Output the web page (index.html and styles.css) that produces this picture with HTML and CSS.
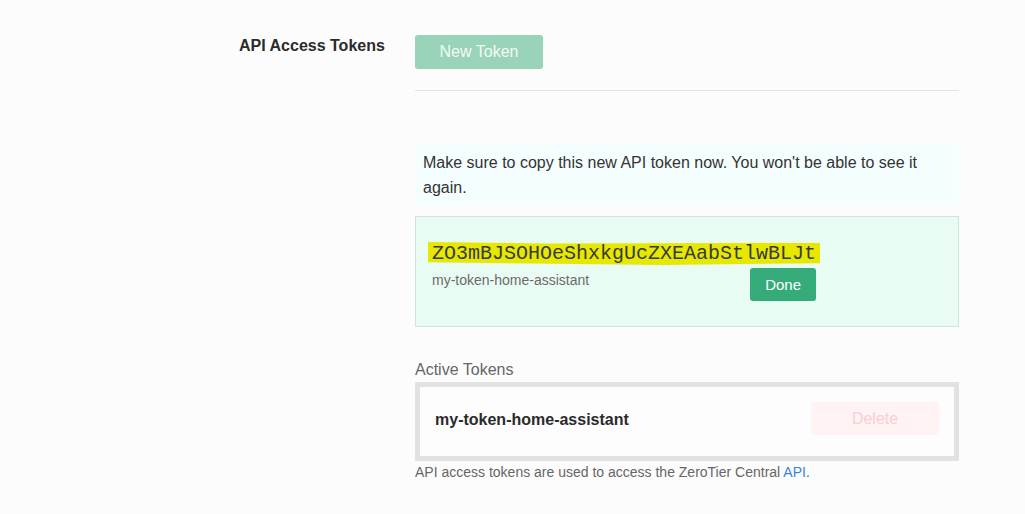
FILE: index.html
```html
<!DOCTYPE html>
<html>
<head>
<meta charset="utf-8">
<link rel="stylesheet" href="styles.css">
</head>
<body>
<div class="page">
  <div class="label">API Access Tokens</div>
  <div class="content">
    <div class="top">
      <button class="btn btn-new">New Token</button>
    </div>
    <div class="notice">Make sure to copy this new API token now. You won't be able to see it again.</div>
    <div class="token-box">
      <div class="token-group">
        <div class="token"><span class="hl">ZO3mBJSOHOeShxkgUcZXEAabStlwBLJt</span></div>
        <div class="token-row">
          <span class="token-name">my-token-home-assistant</span>
          <button class="btn btn-done">Done</button>
        </div>
      </div>
    </div>
    <div class="active-label">Active Tokens</div>
    <div class="active-box">
      <span class="active-name">my-token-home-assistant</span>
      <button class="btn btn-delete">Delete</button>
    </div>
    <div class="footnote">API access tokens are used to access the ZeroTier Central <a href="#" class="link">API</a>.</div>
  </div>
</div>
</body>
</html>
```

FILE: styles.css
```css
html, body {
  margin: 0;
  padding: 0;
  background: #fcfcfc;
  font-family: "Liberation Sans", Arial, sans-serif;
  color: #333;
}
.page {
  display: flex;
  padding: 35px 0 0 239px;
}
.label {
  width: 176px;
  font-weight: bold;
  font-size: 16px;
  line-height: 20px;
  padding-top: 1px;
  color: #2b2b2b;
}
.content {
  width: 544px;
}
.top {
  border-bottom: 1px solid #e3e3e3;
  padding-bottom: 21px;
}
.btn {
  border: none;
  border-radius: 3px;
  font-family: "Liberation Sans", Arial, sans-serif;
  font-size: 16px;
  color: #fff;
  padding: 0;
}
.btn-new {
  width: 128px;
  height: 34px;
  background: #99d3b9;
  color: #f4fbf7;
}
.notice {
  margin-top: 53px;
  background: #f5fefe;
  padding: 6px 8px 6px 8px;
  font-size: 16px;
  line-height: 25px;
  color: #333;
}
.token-box {
  margin-top: 10px;
  background: #e8fcf3;
  border: 1px solid #cfe4db;
  padding: 27px 0 0 16px;
  box-sizing: border-box;
  height: 111px;
}
.token-group {
  display: inline-block;
}
.token {
  font-family: "Liberation Mono", "Courier New", monospace;
  font-size: 20px;
  line-height: 20px;
  color: #3a3a3a;
}
.hl {
  background: #e6e800;
  padding: 0 4px 0 4px;
  margin-left: -4px;
  margin-right: -4px;
  clip-path: polygon(0 0, 30% 6%, 100% 4%, 100% 92%, 60% 100%, 0 88%);
}
.token-row {
  display: flex;
  justify-content: space-between;
  align-items: flex-start;
  margin-top: 5px;
}
.token-name {
  font-size: 14px;
  line-height: 20px;
  color: #6b6b6b;
  padding-top: 1px;
}
.btn-done {
  width: 66px;
  height: 33px;
  background: #36ab7a;
  font-size: 15px;
  margin-top: -1px;
}
.active-label {
  margin-top: 33px;
  font-size: 16px;
  line-height: 20px;
  color: #666;
  margin-bottom: 2px;
}
.active-box {
  border: 5px solid #e2e2e2;
  background: #fdfdfd;
  display: flex;
  justify-content: space-between;
  align-items: center;
  padding: 15px 15px 21px 15px;
}
.active-name {
  font-weight: bold;
  font-size: 16px;
  color: #2b2b2b;
  padding-top: 3px;
}
.btn-delete {
  width: 128px;
  height: 33px;
  background: #fff3f3;
  color: #f8cfd3;
}
.footnote {
  margin-top: 1px;
  font-size: 14px;
  line-height: 20px;
  color: #666;
}
.link {
  color: #3b82e0;
  text-decoration: none;
}
```
